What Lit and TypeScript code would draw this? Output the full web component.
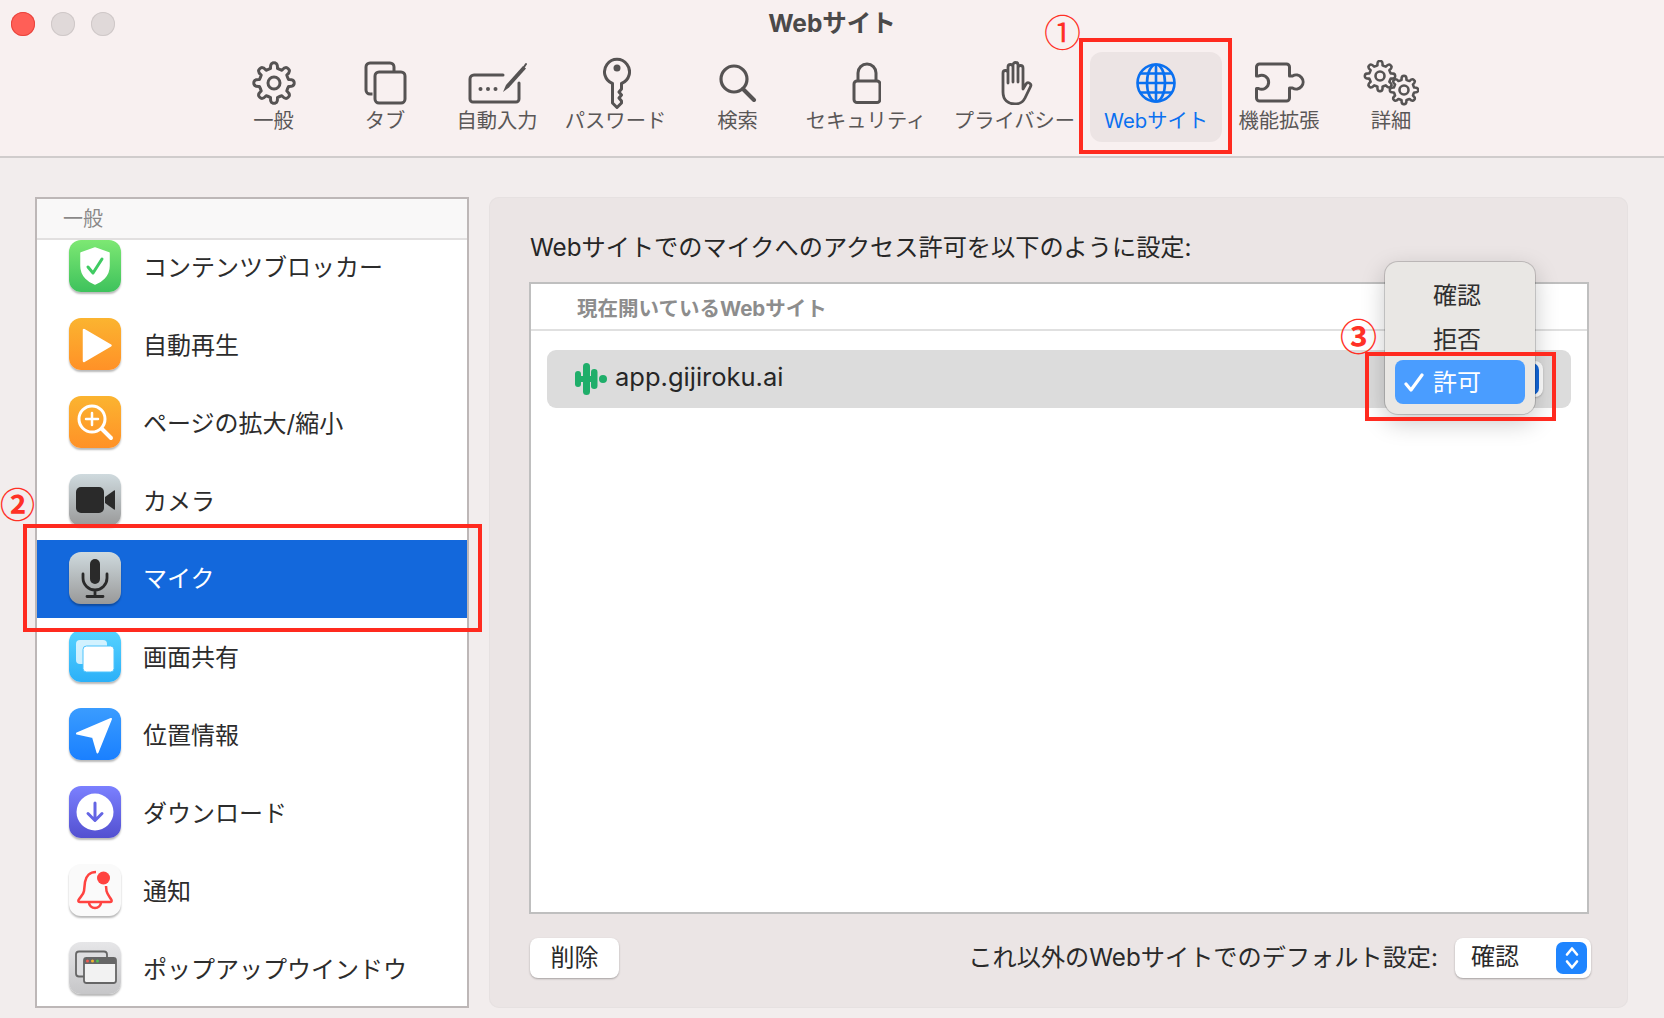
import { LitElement, html, css, svg } from "lit";
import { customElement } from "lit/decorators.js";

function gear(cx: number, cy: number, ro: number, ri: number, n: number): string {
  const pts: string[] = [];
  const step = (Math.PI * 2) / n;
  for (let i = 0; i < n; i++) {
    const a = i * step - Math.PI / 2;
    const w = step * 0.2;
    const g = step * 0.3;
    const p = (r: number, t: number) =>
      `${(cx + r * Math.cos(t)).toFixed(2)} ${(cy + r * Math.sin(t)).toFixed(2)}`;
    pts.push(`${i === 0 ? "M" : "L"}${p(ri, a - g)}`);
    pts.push(`Q${p(ro * 0.98, a - w * 1.2)} ${p(ro, a - w * 0.5)}`);
    pts.push(`Q${p(ro * 1.02, a)} ${p(ro, a + w * 0.5)}`);
    pts.push(`Q${p(ro * 0.98, a + w * 1.2)} ${p(ri, a + g)}`);
    const mid = a + step / 2;
    pts.push(`Q${p(ri * 0.97, mid)} ${p(ri, a + step - g)}`);
  }
  return pts.join(" ") + "Z";
}

const toolIcons = {
  general: svg`<svg width="44" height="44" viewBox="0 0 44 44" fill="none" stroke="#565353" stroke-width="3" stroke-linejoin="round"><path d=${gear(22, 22, 20, 15, 8)}/><circle cx="22" cy="22" r="6"/></svg>`,
  tabs: svg`<svg width="44" height="44" viewBox="0 0 44 44" fill="none" stroke="#565353" stroke-width="3"><path d="M9.5 33H7a4 4 0 0 1-4-4V6a4 4 0 0 1 4-4h20a4 4 0 0 1 4 4v5"/><rect x="12" y="11" width="30" height="31" rx="4"/></svg>`,
  fill: svg`<svg width="60" height="44" viewBox="0 0 60 44" fill="none" stroke="#565353" stroke-width="3" stroke-linecap="round"><path d="M36 14H7a4 4 0 0 0-4 4v20a3 3 0 0 0 3 3h43a3 3 0 0 0 3-3V22"/><circle cx="13.5" cy="28" r="2" fill="#565353" stroke="none"/><circle cx="21" cy="28" r="2" fill="#565353" stroke="none"/><circle cx="28.5" cy="28" r="2" fill="#565353" stroke="none"/><path d="M36 31l3-7 17-19 3 2.5-17 19z" fill="#565353" stroke="none"/><path d="M57 6l2-3" stroke-width="2"/></svg>`,
  key: svg`<svg width="30" height="52" viewBox="-1 0 30 52" fill="none" stroke="#565353" stroke-width="3" stroke-linejoin="round"><path d="M10.5 26.5A12.5 12.5 0 1 1 19.5 26.5V32L17 35l2.5 3-2.5 3 2.5 3v2L15 50.5 10.5 46Z"/><circle cx="15" cy="11" r="3.5" fill="#565353" stroke="none"/></svg>`,
  search: svg`<svg width="38" height="38" viewBox="0 0 38 38" fill="none" stroke="#565353" stroke-width="3.2"><circle cx="15" cy="15" r="13"/><path d="M24 25l11 11" stroke-width="4" stroke-linecap="round"/></svg>`,
  lock: svg`<svg width="30" height="42" viewBox="-1 0 30 42" fill="none" stroke="#565353" stroke-width="3"><rect x="2" y="19" width="26" height="21.5" rx="3"/><path d="M6 19V11a9 9 0 0 1 18 0v8"/></svg>`,
  hand: svg`<svg width="36" height="44" viewBox="-2 0 36 44" fill="none" stroke="#565353" stroke-width="2.8" stroke-linejoin="round" stroke-linecap="round"><path d="M4 12a2.5 2.5 0 0 1 5 0V22V6a2.5 2.5 0 0 1 5 0V21V4a2.5 2.5 0 0 1 5 0V21V7a2.5 2.5 0 0 1 5 0V28l3-5a2.6 2.6 0 0 1 4.5 2.6L26 37c-2 4-5 6-10 6-7 0-12-4-12-12Z"/></svg>`,
  globe: svg`<svg width="44" height="44" viewBox="0 0 44 44" fill="none" stroke="#0a70f0" stroke-width="2.6"><circle cx="22" cy="22" r="18.5"/><ellipse cx="22" cy="22" rx="9" ry="18.5"/><path d="M22 3.5v37M3.5 22h37M6.5 12.5h31M6.5 31.5h31"/></svg>`,
  ext: svg`<svg width="52" height="42" viewBox="-1.5 0 52 42" fill="none" stroke="#565353" stroke-width="3" stroke-linejoin="round"><path d="M5 2H32a3 3 0 0 1 3 3V14h3a7 7 0 1 1 0 12h-3V36a3 3 0 0 1-3 3H5a3 3 0 0 1-3-3V26.5h2a7 7 0 1 0 0-12.5H2V5a3 3 0 0 1 3-3Z"/></svg>`,
  adv: svg`<svg width="56" height="46" viewBox="0 0 56 46" fill="none" stroke="#565353" stroke-width="2.6" stroke-linejoin="round"><path d=${gear(17, 16, 15, 11, 8)}/><circle cx="17" cy="16" r="4.5"/><path d=${gear(41, 30, 14, 10.5, 8)}/><circle cx="41" cy="30" r="4.5"/></svg>`,
};

const rowIcons = {
  shield: svg`<svg viewBox="0 0 52 52"><path d="M26 8l14 5v13c0 10-8 16-14 18-6-2-14-8-14-18V13z" fill="#fff" stroke="#fff" stroke-width="1.5" stroke-linejoin="round"/><path d="M19 27l5 6 9-14" fill="none" stroke="#3fcb62" stroke-width="3" stroke-linecap="round" stroke-linejoin="round"/></svg>`,
  play: svg`<svg viewBox="0 0 52 52"><path d="M15 12v31L41.5 27.5z" fill="#fff" stroke="#fff" stroke-width="2.5" stroke-linejoin="round"/></svg>`,
  zoom: svg`<svg viewBox="0 0 52 52" fill="none" stroke="#fff"><circle cx="23" cy="23" r="13" stroke-width="3"/><path d="M33 33l9 9" stroke-width="4" stroke-linecap="round"/><path d="M23 17v12M17 23h12" stroke-width="2.5" stroke-linecap="round"/></svg>`,
  camera: svg`<svg viewBox="0 0 52 52"><rect x="7" y="13" width="28" height="26" rx="5" fill="#2a2a2a"/><path d="M36 23l9-6.5c.6-.4 1-.1 1 .5v18c0 .6-.4.9-1 .5L36 29z" fill="#2a2a2a"/></svg>`,
  mic: svg`<svg viewBox="0 0 52 52" fill="none" stroke="#2a2a2a"><rect x="21" y="7" width="10" height="25" rx="5" fill="#2a2a2a" stroke="none"/><path d="M14 22v4a12 12 0 0 0 24 0v-4M26 38v6M18 44.5h16" stroke-width="2.8" stroke-linecap="round"/></svg>`,
  screen: svg`<svg viewBox="0 0 52 52"><rect x="7" y="10" width="31" height="24" rx="4" fill="#fff" opacity=".75"/><rect x="14" y="16" width="31" height="26" rx="3.5" fill="#fff" stroke="#4cc4fd" stroke-width="1"/></svg>`,
  location: svg`<svg viewBox="0 0 52 52"><path d="M42 11L8 25.5 24 29l4.5 15.5z" fill="#fff" stroke="#fff" stroke-width="2" stroke-linejoin="round"/></svg>`,
  download: svg`<svg viewBox="0 0 52 52"><circle cx="26" cy="26" r="18.5" fill="#fff"/><path d="M26 17v17M19 27.5l7 7 7-7" fill="none" stroke="#6465e4" stroke-width="3" stroke-linecap="round" stroke-linejoin="round"/></svg>`,
  bell: svg`<svg viewBox="0 0 52 52" fill="none" stroke="#ff4340" stroke-width="2.5" stroke-linejoin="round"><path d="M27 8c-6 0-10 4-11 10l-1 9c-.5 4-4 6-5.5 9-.5 1.5 0 2 1.5 2h30c1.5 0 2-.5 1.5-2-1.5-3-4-5-5-9l-.5-5"/><path d="M20 38.5a6 5.5 0 0 0 12 0"/><circle cx="34.5" cy="14" r="6.5" fill="#ff4340" stroke="none"/></svg>`,
  popup: svg`<svg viewBox="0 0 52 52"><rect x="7" y="9.5" width="31" height="25" rx="3" fill="#dedee0" stroke="#666" stroke-width="1.8"/><rect x="15" y="16" width="32" height="25" rx="2.5" fill="#f2f2f2" stroke="#666" stroke-width="1.8"/><path d="M15 22v-3.5a2.5 2.5 0 0 1 2.5-2.5h27a2.5 2.5 0 0 1 2.5 2.5V22z" fill="#666"/><circle cx="18.5" cy="19" r="1.5" fill="#f25a50"/><circle cx="23.5" cy="19" r="1.5" fill="#f0b52e"/><circle cx="28.5" cy="19" r="1.5" fill="#4fc04f"/></svg>`,
};

type ToolKey = keyof typeof toolIcons;
const tools: { k: ToolKey; t: string; on?: boolean }[] = [
  { k: "general", t: "一般" },
  { k: "tabs", t: "タブ" },
  { k: "fill", t: "自動入力" },
  { k: "key", t: "パスワード" },
  { k: "search", t: "検索" },
  { k: "lock", t: "セキュリティ" },
  { k: "hand", t: "プライバシー" },
  { k: "globe", t: "Webサイト", on: true },
  { k: "ext", t: "機能拡張" },
  { k: "adv", t: "詳細" },
];

type RowKey = keyof typeof rowIcons;
const rows: { k: RowKey; c: string; t: string; on?: boolean }[] = [
  { k: "shield", c: "green", t: "コンテンツブロッカー" },
  { k: "play", c: "orange", t: "自動再生" },
  { k: "zoom", c: "orange", t: "ページの拡大/縮小" },
  { k: "camera", c: "steel", t: "カメラ" },
  { k: "mic", c: "steel", t: "マイク", on: true },
  { k: "screen", c: "cyan", t: "画面共有" },
  { k: "location", c: "blue", t: "位置情報" },
  { k: "download", c: "violet", t: "ダウンロード" },
  { k: "bell", c: "paper", t: "通知" },
  { k: "popup", c: "silver", t: "ポップアップウインドウ" },
];

@customElement("app-root")
export class AppRoot extends LitElement {
  static styles = css`
    :host {
      display: block;
      position: relative;
      width: 1664px;
      height: 1018px;
      overflow: hidden;
      background: #f2eded;
      font-family: Inter, "Noto Sans CJK JP", sans-serif;
      color: #2a2a2a;
    }
    .window { display: flex; flex-direction: column; height: 100%; }

    .toolbar {
      height: 156px;
      flex: none;
      background: #f8f0f0;
      border-bottom: 2px solid #d0cccc;
      position: relative;
    }
    .titlebar { height: 52px; display: flex; align-items: center; justify-content: center; position: relative; }
    .title { font-size: 24.5px; font-weight: 700; color: #4b4949; margin-top: -6px; line-height: 32px; }
    .lights { position: absolute; left: 11px; top: 12px; display: flex; gap: 16px; }
    .light { width: 24px; height: 24px; border-radius: 50%; background: #e0d9d9; box-shadow: inset 0 0 0 1px #cfc8c8; }
    .light.red { background: #ff5f57; box-shadow: inset 0 0 0 1px #e8453e; }

    .tools {
      display: grid;
      grid-template-columns: 103px 120px 104px 133px 111px 146px 151px 132px 114px 110px;
      height: 90px;
      padding-left: 222px;
    }
    .tool {
      display: flex; flex-direction: column; align-items: center;
      border-radius: 12px; color: #5a5757; font-size: 20.3px;
    }
    .tool.on { background: #ece4e4; color: #0a70f0; }
    .tool-icon { height: 52px; display: flex; align-items: center; justify-content: center; margin-top: 5px; }
    .tool-icon svg { display: block; }
    .tool-label { line-height: 28px; margin-top: -2px; white-space: nowrap; }

    .body { flex: 1; display: flex; gap: 20px; padding: 39px 36px 10px 35px; min-height: 0; }

    .list {
      width: 434px; flex: none; box-sizing: border-box;
      background: #fff; border: 2px solid #bdb7b7;
      display: flex; flex-direction: column; overflow: hidden;
    }
    .list-head {
      height: 41px; flex: none; box-sizing: border-box;
      background: #f9f8f8; border-bottom: 2px solid #e2e0e0;
      color: #8a8888; font-size: 20px; padding-left: 26px; line-height: 40px;
    }
    .row {
      height: 78px; flex: none; display: flex; align-items: center; gap: 22px;
      padding-left: 32px; font-size: 24px; color: #2c2c2c;
    }
    .row.first { height: 65px; align-items: flex-start; }
    .row.first .row-text { margin-top: 6px; }
    .row.on { background: #1368dc; color: #fff; margin: 1px 0 -1px; }
    .row.on .ico { margin-top: -2px; }
    .row-text { line-height: 36px; white-space: nowrap; padding-top: 4px; }
    .row.on .row-text { padding-top: 0; }
    .ico {
      width: 52px; height: 52px; flex: none; border-radius: 12px;
      box-shadow: 0 2px 2px rgba(0,0,0,.28);
    }
    .ico svg { display: block; width: 52px; height: 52px; }
    .green { background: linear-gradient(#7de873, #3ec25c); }
    .orange { background: linear-gradient(#fbb430, #ff9127); }
    .steel { background: linear-gradient(#cfdade, #999); }
    .cyan { background: linear-gradient(#56d3ff, #2cb0f8); }
    .blue { background: linear-gradient(#3a9cff, #1a80ff); }
    .violet { background: linear-gradient(#7b80ff, #5350d0); }
    .paper { background: #fafafa; }
    .silver { background: linear-gradient(#e6e6e8, #c6c6c8); }

    .panel {
      flex: 1; min-width: 0; box-sizing: border-box;
      background: #ebe5e5; border-radius: 10px;
      box-shadow: inset 0 0 0 1px #e6e1e1;
      padding: 34px 37px 30px 40px;
      display: flex; flex-direction: column;
    }
    .panel-label { font-size: 24.2px; line-height: 34px; height: 34px; margin-bottom: 17px; white-space: nowrap; margin-left: 1px; color: #262626; }
    .table {
      flex: 1; min-height: 0; box-sizing: border-box; margin-right: 2px;
      background: #fff; border: 2px solid #bfbfbf;
    }
    .table-head {
      height: 47px; box-sizing: border-box; border-bottom: 2px solid #e0e0e0;
      padding-left: 46px; font-size: 20.5px; font-weight: 700; line-height: 49px; color: #8d8d8d;
    }
    .site {
      margin: 19px 16px 0 16px; height: 58px; border-radius: 9px; background: #dcdcdc;
      display: flex; align-items: center; padding: 0 28px; gap: 8px;
      font-size: 25.5px; color: #262626;
    }
    .site svg { display: block; flex: none; }
    .site-name { padding-bottom: 6px; }
    .spacer { flex: 1; }
    .site-select {
      width: 140px; height: 36px; border-radius: 8px; background: #fff; box-sizing: border-box;
      box-shadow: 0 1px 2px rgba(0,0,0,.2); padding: 2px 4px 2px 0; display: flex; justify-content: flex-end;
    }
    .site-select i { display: block; width: 32px; background: #1368dc; border-radius: 7px; }

    .foot { height: 40px; margin-top: 24px; display: flex; align-items: center; justify-content: space-between; flex: none; }
    .btn {
      width: 89px; height: 40px; margin-left: 1px; background: #fff; border-radius: 8px;
      box-shadow: 0 1px 2px rgba(0,0,0,.3); font-size: 24px; box-sizing: border-box; padding-bottom: 6px;
      display: flex; align-items: center; justify-content: center;
    }
    .foot-right { display: flex; align-items: center; gap: 17px; font-size: 24.2px; white-space: nowrap; }
    .foot-label { padding-bottom: 6px; }
    .select {
      width: 136px; height: 40px; box-sizing: border-box; background: #fff; border-radius: 8px;
      box-shadow: 0 1px 2px rgba(0,0,0,.3); padding: 4px 4px 4px 16px;
      display: flex; align-items: center; justify-content: space-between; font-size: 24px;
    }
    .select span { padding-bottom: 8px; }
    .stepper {
      width: 31px; height: 32px; border-radius: 7px; background: #1f85ff;
      display: flex; align-items: center; justify-content: center;
    }

    .menu {
      position: absolute; left: 1385px; top: 262px; width: 150px; height: 152px; box-sizing: border-box;
      background: #e9e7e4; border-radius: 13px;
      box-shadow: 0 0 0 1px rgba(0,0,0,.16), 0 8px 24px rgba(0,0,0,.22);
      padding: 11px 10px 0; font-size: 24px;
    }
    .mi { height: 44px; line-height: 46px; padding-left: 38px; border-radius: 8px; position: relative; color: #2f2f2f; }
    .mi.on { background: #4a9dff; color: #fff; margin-top: -1px; }
    .mi svg { position: absolute; left: 9px; top: 13px; }

    .mark { position: absolute; border: 4px solid #ff2a1f; box-sizing: border-box; pointer-events: none; }
    .m1 { left: 1079px; top: 38px; width: 153px; height: 116px; }
    .m2 { left: 23px; top: 524px; width: 459px; height: 108px; }
    .m3 { left: 1365px; top: 352px; width: 191px; height: 69px; }
    .num {
      position: absolute; color: #ff3126; font-family: "Noto Sans CJK JP", sans-serif;
      font-size: 37px; line-height: 44px; width: 41px; text-align: center;
    }
    .n1 { left: 1042px; top: 9px; }
    .n2 { left: 0; top: 481px; font-size: 35px; width: 35px; font-weight: 700; }
    .n3 { left: 1338px; top: 313px; font-weight: 700; }
  `;

  render() {
    return html`
      <div class="window">
        <header class="toolbar">
          <div class="titlebar">
            <div class="lights">
              <span class="light red"></span><span class="light"></span><span class="light"></span>
            </div>
            <div class="title">Webサイト</div>
          </div>
          <nav class="tools">
            ${tools.map(
              (t) => html`<div class="tool ${t.on ? "on" : ""}">
                <div class="tool-icon">${toolIcons[t.k]}</div>
                <div class="tool-label">${t.t}</div>
              </div>`
            )}
          </nav>
        </header>
        <main class="body">
          <section class="list">
            <div class="list-head">一般</div>
            ${rows.map(
              (r, i) => html`<div class="row ${r.on ? "on" : ""} ${i === 0 ? "first" : ""}">
                <div class="ico ${r.c}">${rowIcons[r.k]}</div>
                <div class="row-text">${r.t}</div>
              </div>`
            )}
          </section>
          <section class="panel">
            <div class="panel-label">Webサイトでのマイクへのアクセス許可を以下のように設定:</div>
            <div class="table">
              <div class="table-head">現在開いているWebサイト</div>
              <div class="site">
                <svg width="32" height="32" viewBox="0 0 32 32" fill="#1fae6a">
                  <rect x="0" y="8" width="6" height="16" rx="3"/>
                  <rect x="8" y="0" width="7" height="32" rx="3.5"/>
                  <rect x="5" y="13" width="4" height="6"/>
                  <rect x="16" y="6" width="6.5" height="20" rx="3.2"/>
                  <rect x="14" y="13" width="3" height="6"/>
                  <circle cx="28" cy="16" r="4"/>
                </svg>
                <span class="site-name">app.gijiroku.ai</span>
                <span class="spacer"></span>
                <div class="site-select"><i></i></div>
              </div>
            </div>
            <div class="foot">
              <div class="btn">削除</div>
              <div class="foot-right">
                <span class="foot-label">これ以外のWebサイトでのデフォルト設定:</span>
                <div class="select">
                  <span>確認</span>
                  <div class="stepper">
                    <svg width="16" height="26" viewBox="0 0 16 26" fill="none" stroke="#fff" stroke-width="2.6" stroke-linecap="round" stroke-linejoin="round"><path d="M3 9.5L8 3.5l5 6M3 16.5l5 6 5-6"/></svg>
                  </div>
                </div>
              </div>
            </div>
          </section>
        </main>
      </div>

      <div class="menu">
        <div class="mi">確認</div>
        <div class="mi">拒否</div>
        <div class="mi on">
          <svg width="20" height="20" viewBox="0 0 20 20" fill="none" stroke="#fff" stroke-width="3.2" stroke-linecap="round" stroke-linejoin="round"><path d="M2 11l5 6L18 2"/></svg>
          許可
        </div>
      </div>

      <div class="mark m1"></div>
      <div class="mark m2"></div>
      <div class="mark m3"></div>
      <div class="num n1">①</div>
      <div class="num n2">②</div>
      <div class="num n3">③</div>
    `;
  }
}
